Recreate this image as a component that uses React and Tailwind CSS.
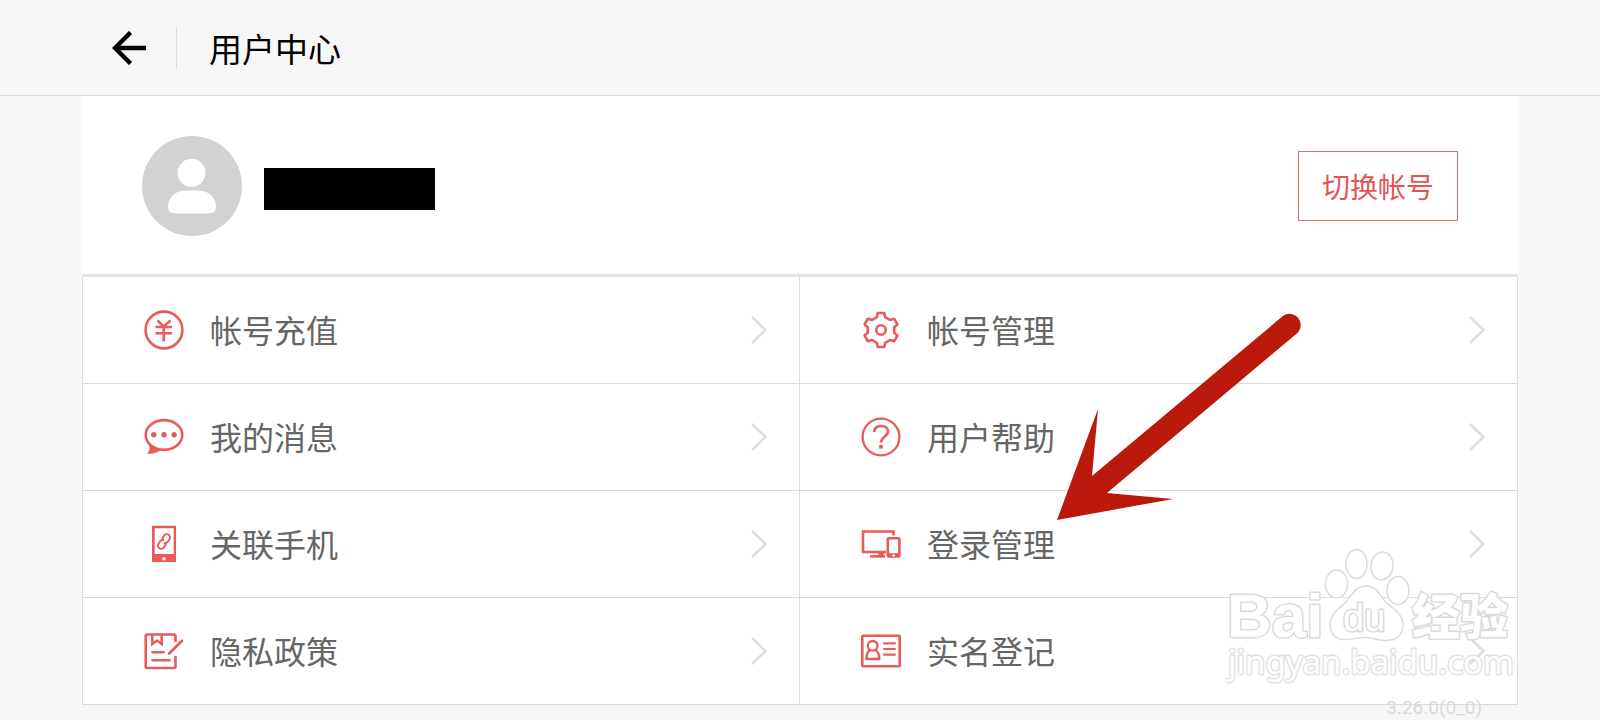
import React from "react";

const Icon = ({ children }) => (
  <svg
    viewBox="0 0 40 40"
    className="w-10 h-10 shrink-0 text-[#ea5a5a]"
    fill="none"
    stroke="currentColor"
    strokeWidth="2.6"
    aria-hidden="true"
  >
    {children}
  </svg>
);

const RechargeIcon = () => (
  <Icon>
    <circle cx="20" cy="20" r="18.4" />
    <path d="M13.5 10.5L19.8 16.5L26.5 10.5M19.8 16.5V31.5M11.5 17H28M11.5 23.3H28" />
  </Icon>
);

const GearIcon = () => (
  <Icon>
    <path
      strokeLinejoin="round"
      d="M15.8 7.2L16.7 3H23.3L24.2 7.2L29 10L33.1 8.7L36.4 14.4L33.2 17.2V22.8L36.4 25.6L33.1 31.3L29 30L24.2 32.8L23.3 37H16.7L15.8 32.8L11 30L6.9 31.3L3.6 25.6L6.8 22.8V17.2L3.6 14.4L6.9 8.7L11 10Z"
    />
    <circle cx="20" cy="20" r="4.7" />
  </Icon>
);

const MessageIcon = () => (
  <Icon>
    <ellipse cx="20" cy="18" rx="18.3" ry="14.900" />
    <path
      d="M5.5 28.5C6.8 31.500 5.5 34.500 3.700 36.500C9 36.300 13 35.500 16 33L10 30Z"
      fill="currentColor"
      strokeWidth="0.8"
    />
    <g fill="currentColor" stroke="none">
      <circle cx="9.8" cy="17.7" r="2.7" />
      <circle cx="20" cy="17.7" r="2.7" />
      <circle cx="30.1" cy="17.7" r="2.7" />
    </g>
  </Icon>
);

const HelpIcon = () => (
  <Icon>
    <circle cx="20" cy="20" r="18.4" strokeWidth="2.3" />
    <path d="M13.2 15C13.4 11 16 9 20 9C24.3 9 27 11.3 27 14.6C27 19.5 20 19.5 20 25.5" />
    <path d="M18.2 29.8H21.8" strokeWidth="3.6" />
  </Icon>
);

const PhoneLinkIcon = () => (
  <Icon>
    <path
      fill="currentColor"
      stroke="none"
      fillRule="evenodd"
      d="M9 1.7H31Q32 1.7 32 2.7V37Q32 38 31 38H9Q8 38 8 37V2.7Q8 1.7 9 1.7ZM10.7 4.3V30H29.7V4.3ZM20 33A1.7 1.7 0 1 0 20 36.4A1.7 1.7 0 1 0 20 33Z"
    />
    <g transform="rotate(35 20 17.5)" strokeWidth="1.9" strokeLinecap="round">
      <path d="M18 17.5Q16.8 16.8 16.8 15V12.5A3.2 3.2 0 0 1 23.2 12.5V15.5Q23.2 17.5 21.5 18.5" />
      <path d="M22 17.5Q23.2 18.2 23.2 20V22.5A3.2 3.2 0 0 1 16.8 22.5V19.5Q16.8 17.5 18.5 16.5" />
    </g>
  </Icon>
);

const DevicesIcon = () => (
  <Icon>
    <path d="M32.5 11.5V7.5H2V28H25" />
    <path d="M20 28V32" strokeWidth="5.5" />
    <path d="M9 32.4H24" />
    <rect x="26.8" y="14.3" width="11.6" height="18.2" rx="0.8" />
    <path d="M27 31.2H38" strokeWidth="4" />
    <circle cx="32.6" cy="31.4" r="1.2" fill="white" stroke="none" />
  </Icon>
);

const PolicyIcon = () => (
  <Icon>
    <path d="M31.5 11V5Q31.5 3.5 30 3.5H3.2Q1.7 3.5 1.7 5V35.5Q1.7 37 3.2 37H30Q31.5 37 31.5 35.5V25" />
    <path d="M8.3 3.5V13L13 9.5L17.7 13V3.5" />
    <path d="M25.2 22.5L38 9.7" strokeWidth="2.8" strokeLinecap="round" />
    <path d="M8.5 21.3H19.5M8.5 29.3H25.5" strokeLinecap="round" />
  </Icon>
);

const IdCardIcon = () => (
  <Icon>
    <rect x="1.3" y="4.8" width="37.4" height="30.4" rx="0.8" />
    <circle cx="11.7" cy="14.8" r="4.8" strokeWidth="2.3" />
    <path
      d="M8.8 19.2C6.5 20.5 5.5 23.5 5.5 28H18.3C18.3 23.5 17 20.5 14.6 19.2"
      strokeWidth="2.3"
    />
    <path d="M22.3 12.3H34.7M22.3 18H34.7M22.3 23.7H34.7" strokeWidth="2.2" />
  </Icon>
);

const ITEMS = [
  { label: "帐号充值", icon: RechargeIcon },
  { label: "帐号管理", icon: GearIcon },
  { label: "我的消息", icon: MessageIcon },
  { label: "用户帮助", icon: HelpIcon },
  { label: "关联手机", icon: PhoneLinkIcon },
  { label: "登录管理", icon: DevicesIcon },
  { label: "隐私政策", icon: PolicyIcon },
  { label: "实名登记", icon: IdCardIcon },
];

const Chevron = () => (
  <svg
    viewBox="0 0 16 28"
    className="w-4 h-7 shrink-0"
    fill="none"
    stroke="#dedede"
    strokeWidth="2.6"
    aria-hidden="true"
  >
    <path d="M1 1L14.5 14L1 27" />
  </svg>
);

const MenuItem = ({ label, icon: ItemIcon }) => (
  <a
    href="#"
    className="flex items-center h-[107px] pl-[61px] pr-8 border-b border-[#dcdcdc] odd:border-r"
  >
    <ItemIcon />
    <span className="ml-[26px] pb-0.5 text-[32px] leading-10 text-[#666]">{label}</span>
    <span className="ml-auto">
      <Chevron />
    </span>
  </a>
);

const Avatar = () => (
  <svg viewBox="0 0 100 100" className="w-[100px] h-[100px] shrink-0" aria-hidden="true">
    <circle cx="50" cy="50" r="50" fill="#d2d2d2" />
    <circle cx="49.5" cy="36.8" r="14" fill="white" />
    <path
      d="M26 71C26 61 34 54.5 43 54.5H57C66 54.5 74 61 74 71Q74 77.5 66 77.5H34Q26 77.5 26 71Z"
      fill="white"
    />
  </svg>
);

const PointerArrow = () => (
  <svg
    viewBox="0 0 246 208"
    className="absolute left-1/2 top-[35px] ml-[257px] w-[246px] h-[208px] pointer-events-none"
    aria-hidden="true"
  >
    <path
      d="M0 208L41 97L35 164L226.5 3.500A11.3 11.3 0 0 1 241 20.5L50 181L116 187Z"
      fill="#bb190b"
    />
  </svg>
);

const Watermark = () => (
  <svg
    viewBox="0 0 290 148"
    className="absolute right-px bottom-3 w-[290px] h-[148px] pointer-events-none"
    fill="white"
    stroke="#dadada"
    strokeWidth="1.5"
    aria-hidden="true"
  >
    <ellipse cx="110.500" cy="39" rx="11" ry="14" />
    <ellipse cx="130.500" cy="19" rx="10.5" ry="14.5" />
    <ellipse cx="156" cy="21" rx="11" ry="14" transform="rotate(8 156 21)" />
    <ellipse cx="172" cy="45.5" rx="11" ry="14" />
    <path d="M140 41C129 41 126 50 119 58C111 65 104 70 104 80C104 91 112 95 121 94.5C130 94 133 92.5 140 92.5C148 92.5 152 96 161 95.5C170 95 177 90 177 79C177 69 168 65 160 57C153 50 151 41 140 41Z" />
    <g style={{ paintOrder: "stroke" }} strokeWidth="3" strokeLinejoin="round">
      <text x="1" y="92" fontSize="62" fontWeight="700" fontFamily="Liberation Sans, sans-serif">
        Bai
      </text>
      <text x="117" y="86" fontSize="38" fontFamily="Liberation Sans, sans-serif">
        du
      </text>
      <text x="186" y="89" fontSize="48" fontWeight="900" fontFamily="Noto Sans CJK SC, sans-serif">
        经验
      </text>
      <text x="2" y="129" fontSize="33" stroke="#e2e2e2" fontFamily="Noto Sans, sans-serif">
        jingyan.baidu.com
      </text>
    </g>
  </svg>
);

export default function App() {
  return (
    <div className="min-h-screen bg-[#f7f7f7] font-['Noto_Sans_CJK_SC',sans-serif]">
      <header className="flex items-center h-24 pl-28 border-b border-[#dfdfdf]">
        <button type="button" aria-label="返回" className="w-[34px] h-[34px]">
          <svg viewBox="0 0 34 34" fill="none" stroke="black" strokeWidth="4.4">
            <path d="M34 17H3M18.5 1.5L3 17L18.5 32.5" />
          </svg>
        </button>
        <span className="ml-[30px] w-px h-[42px] bg-[#dfdfdf]" />
        <h1 className="ml-8 text-[33px] leading-10 text-black">用户中心</h1>
      </header>

      <main className="mx-[82px]">
        <section className="flex items-center h-[181px] px-[60px] pt-0.5 bg-white border-b-3 border-[#e4e4e4]">
          <Avatar />
          <div className="ml-[22px] mt-1.5 w-[171px] h-[42px] bg-black" />
          <button
            type="button"
            className="ml-auto w-40 h-[70px] border border-[#e06a6a] text-[28px] leading-10 text-[#e55454]"
          >
            切换帐号
          </button>
        </section>

        <nav className="relative grid grid-cols-2 bg-white border-x border-[#dcdcdc]">
          {ITEMS.map((item) => (
            <MenuItem key={item.label} {...item} />
          ))}
          <PointerArrow />
          <Watermark />
        </nav>

        <p className="relative -mt-[9px] pr-9 text-right text-[19px] leading-6 text-[#d9d9d9] font-[Roboto,sans-serif]">
          3.26.0(0_0)
        </p>
      </main>
    </div>
  );
}
